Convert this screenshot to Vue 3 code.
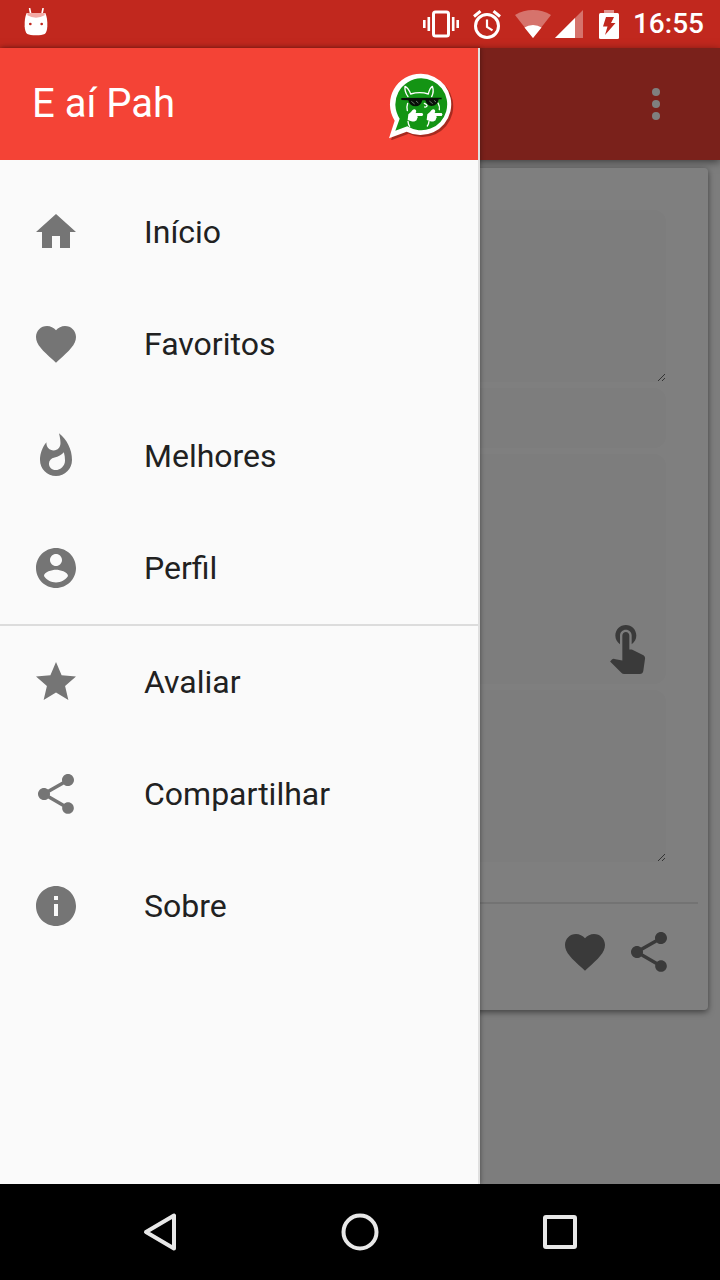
<script setup>
import { ref } from 'vue'

const heart =
  'M12 21.35l-1.45-1.32C5.4 15.36 2 12.28 2 8.5 2 5.42 4.42 3 7.5 3c1.74 0 3.41.81 4.5 2.09C13.09 3.81 14.76 3 16.5 3 19.58 3 22 5.42 22 8.5c0 3.78-3.4 6.86-8.55 11.54z'
const share =
  'M18 16.08c-.76 0-1.44.3-1.96.77L8.91 12.7c.05-.23.09-.46.09-.7s-.04-.47-.09-.7l7.05-4.11c.54.5 1.25.81 2.04.81 1.66 0 3-1.34 3-3s-1.34-3-3-3-3 1.34-3 3c0 .24.04.47.09.7L8.04 9.81C7.5 9.31 6.79 9 6 9c-1.66 0-3 1.34-3 3s1.34 3 3 3c.79 0 1.5-.31 2.04-.81l7.12 4.16c-.05.21-.08.43-.08.65 0 1.61 1.31 2.92 2.92 2.92s2.92-1.31 2.92-2.92-1.31-2.92-2.92-2.92z'
const touch =
  'M9 11.24V7.5C9 6.12 10.12 5 11.5 5S14 6.12 14 7.5v3.74c1.21-.81 2-2.18 2-3.74C16 5.01 13.99 3 11.5 3S7 5.01 7 7.5c0 1.56.79 2.93 2 3.74zm9.84 4.63l-4.54-2.26c-.17-.07-.35-.11-.54-.11H13v-6c0-.83-.67-1.5-1.5-1.5S10 6.67 10 7.5v10.74l-3.43-.72c-.08-.01-.15-.03-.24-.03-.31 0-.59.13-.79.33l-.79.8 4.94 4.94c.27.27.65.44 1.06.44h6.79c.75 0 1.33-.55 1.44-1.28l.75-5.27c.01-.07.02-.14.02-.2 0-.62-.38-1.16-.91-1.38z'

const groups = [
  [
    { label: 'Início', icon: 'M10 20v-6h4v6h5v-8h3L12 3 2 12h3v8z' },
    { label: 'Favoritos', icon: heart },
    {
      label: 'Melhores',
      icon: 'M13.5.67s.74 2.65.74 4.8c0 2.06-1.35 3.73-3.41 3.73-2.07 0-3.63-1.67-3.63-3.73l.03-.36C5.21 7.51 4 10.62 4 14c0 4.42 3.58 8 8 8s8-3.58 8-8C20 8.61 17.41 3.8 13.5.67zM11.71 19c-1.78 0-3.22-1.4-3.22-3.14 0-1.62 1.05-2.76 2.81-3.12 1.77-.36 3.6-1.21 4.62-2.58.39 1.29.59 2.65.59 4.04 0 2.65-2.15 4.8-4.8 4.8z',
    },
    {
      label: 'Perfil',
      icon: 'M12 2C6.48 2 2 6.48 2 12s4.48 10 10 10 10-4.48 10-10S17.52 2 12 2zm0 3c1.66 0 3 1.34 3 3s-1.34 3-3 3-3-1.34-3-3 1.34-3 3-3zm0 14.2c-2.5 0-4.71-1.28-6-3.22.03-1.99 4-3.08 6-3.08 1.99 0 5.97 1.09 6 3.08-1.29 1.94-3.5 3.22-6 3.22z',
    },
  ],
  [
    {
      label: 'Avaliar',
      icon: 'M12 17.27L18.18 21l-1.64-7.03L22 9.24l-7.19-.61L12 2 9.19 8.63 2 9.24l5.46 4.73L5.82 21z',
    },
    { label: 'Compartilhar', icon: share },
    {
      label: 'Sobre',
      icon: 'M12 2C6.48 2 2 6.48 2 12s4.48 10 10 10 10-4.48 10-10S17.52 2 12 2zm1 15h-2v-6h2v6zm0-8h-2V7h2v2z',
    },
  ],
]

const first = ref('')
const second = ref('')
const third = ref('')
const fourth = ref('')
</script>

<template>
  <div class="screen">
    <header class="status">
      <svg class="droid" viewBox="72 24 72 84" aria-hidden="true">
        <path d="M89 26l3 15M129 26l-3 15" stroke="#fff" stroke-width="5" stroke-linecap="round" />
        <path d="M80 39h56q7 16 6 40-1 19-8 23-8 4-26 4t-26-4q-7-4-8-23-1-24 6-40z" fill="#fff" />
        <path d="M82 39h52v7q-12 7-26 7t-26-7z" fill="#f3aaa5" />
        <circle cx="91" cy="72" r="4" fill="#c1281e" />
        <circle cx="125" cy="72" r="4" fill="#c1281e" />
      </svg>
      <div class="indicators">
        <svg width="36" height="28" viewBox="0 0 36 28" aria-hidden="true">
          <rect x="10.5" y="2" width="15" height="24" rx="2" fill="none" stroke="#fff" stroke-width="3" />
          <path d="M1.3 10v8M5.8 7v14M30.2 7v14M34.7 10v8" stroke="#fff" stroke-width="2.6" />
        </svg>
        <svg width="32" height="32" viewBox="0 0 32 32" aria-hidden="true">
          <circle cx="16" cy="18" r="11.5" fill="none" stroke="#fff" stroke-width="3" />
          <path d="M16 11.5V19l5.5 3.4" fill="none" stroke="#fff" stroke-width="2.2" />
          <path d="M3 8.5l6.5-5.400M29 8.500l-6.500-5.400" stroke="#fff" stroke-width="3" />
        </svg>
        <div class="radio">
          <svg width="36" height="28" viewBox="0 0 36 28" aria-hidden="true">
            <path d="M0 5Q8 0 18 0t18 5L18 28z" fill="#fff" fill-opacity=".35" />
            <path d="M9.5 17.5Q13 15 18 15t8.5 2.5L18 28z" fill="#fff" />
          </svg>
          <svg width="28" height="28" viewBox="0 0 28 28" aria-hidden="true">
            <path d="M28 0v28H0z" fill="#fff" fill-opacity=".35" />
            <path d="M20 8v20H0z" fill="#fff" />
          </svg>
        </div>
        <svg class="battery" width="20" height="29" viewBox="0 0 20 29" aria-hidden="true">
          <path d="M5 0h10v3H5z" fill="#fff" fill-opacity=".5" />
          <path d="M1.5 3h17q1.500 0 1.500 1.500v23q0 1.500-1.500 1.500h-17Q0 29 0 27.500v-23Q0 3 1.500 3z" fill="#fff" />
          <path d="M7 7h8l-3 6h4.500L6 25l2.500-8.500H4z" fill="#c1281e" />
        </svg>
        <time>16:55</time>
      </div>
    </header>

    <div class="app">
      <main class="page" inert>
        <div class="toolbar">
          <button class="icon-button" aria-label="Mais opções">
            <svg width="48" height="48" viewBox="0 0 24 24" aria-hidden="true">
              <circle cx="12" cy="6" r="2" /><circle cx="12" cy="12" r="2" /><circle cx="12" cy="18" r="2" />
            </svg>
          </button>
        </div>
        <section class="card">
          <div class="fields">
            <textarea v-model="first" class="field medium grip" aria-label="Texto"></textarea>
            <input v-model="second" class="field short" type="text" aria-label="Título" />
            <div class="tappable">
              <textarea v-model="third" class="field tall" aria-label="Mensagem"></textarea>
              <button class="icon-button tap" aria-label="Tocar">
                <svg width="56" height="56" viewBox="0 0 24 24" aria-hidden="true"><path :d="touch" /></svg>
              </button>
            </div>
            <textarea v-model="fourth" class="field medium grip" aria-label="Resposta"></textarea>
          </div>
          <div class="actions">
            <button class="icon-button" aria-label="Favoritar">
              <svg width="48" height="48" viewBox="0 0 24 24" aria-hidden="true"><path :d="heart" /></svg>
            </button>
            <button class="icon-button" aria-label="Compartilhar">
              <svg width="48" height="48" viewBox="0 0 24 24" aria-hidden="true"><path :d="share" /></svg>
            </button>
          </div>
        </section>
      </main>

      <div class="scrim"></div>

      <aside class="drawer">
        <div class="drawer-head">
          <h1>E aí Pah</h1>
          <svg class="logo" viewBox="24 12 204 216" aria-hidden="true">
            <path
              d="M123 29a92 92 0 1 1-43 174L27 223l17-53A92 92 0 0 1 123 29z"
              transform="translate(6 6)" fill="#7c1d14" fill-opacity=".65"
            />
            <path d="M123 29a92 92 0 1 1-43 174L27 223l17-53A92 92 0 0 1 123 29z" fill="#fff" />
            <path d="M123 43a78 78 0 1 1-41 144L46 200l13-36A78 78 0 0 1 123 43z" fill="#149414" />
            <g fill="none" stroke="#fff" stroke-width="4" stroke-linecap="round" stroke-linejoin="round">
              <path d="M84 98Q73 82 75 67q10 4 17 23 28-8 53 0 4-17 12-23 6 16-2 31" />
              <path d="M83 118q-4 12-1 22M174 117q6 11 4 20M84 172q1 10 5 15M147 172q-1 9-5 14" />
              <path d="M133 118q9 3 8 8-2 4-7 3" />
            </g>
            <path
              d="M64 102l121-1v5h-9q-3 20-22 20-13 0-18-17h-9q-5 18-20 18-18 0-22-18l-21-1z"
              fill="#081008"
            />
            <path d="M94 112l10 8M108 111l7 6M148 111l10 8M162 109l6 5" stroke="#9db09d" stroke-width="2" />
            <g fill="#fff">
              <path d="M85 151q8-5 12-12 7-6 11 0 2 4-1 8h20q5 4 0 9h-15q3 5-1 8 0 6-5 7-5 3-12 1l-11-4z" />
              <path d="M142 151q8-5 12-12 7-6 11 0 2 4-1 8h21q5 4 0 9h-16q3 5-1 8 0 6-5 7-5 3-12 1l-11-4z" />
            </g>
          </svg>
        </div>
        <nav class="menu">
          <ul v-for="(group, i) in groups" :key="i">
            <li v-for="item in group" :key="item.label">
              <a href="#">
                <svg width="48" height="48" viewBox="0 0 24 24" aria-hidden="true"><path :d="item.icon" /></svg>
                <span>{{ item.label }}</span>
              </a>
            </li>
          </ul>
        </nav>
      </aside>
    </div>

    <footer class="system-nav">
      <button aria-label="Voltar">
        <svg width="40" height="40" viewBox="0 0 40 40"><path d="M34 3.500v33L6 20z" /></svg>
      </button>
      <button aria-label="Tela inicial">
        <svg width="40" height="40" viewBox="0 0 40 40"><circle cx="20" cy="20" r="16.500" /></svg>
      </button>
      <button aria-label="Recentes">
        <svg width="40" height="40" viewBox="0 0 40 40"><rect x="5" y="5" width="30" height="30" rx="1" /></svg>
      </button>
    </footer>
  </div>
</template>

<style>
body {
  margin: 0;
  background: #000;
}
</style>

<style scoped>
.screen {
  display: flex;
  flex-direction: column;
  min-height: 100vh;
  font-family: Roboto, "Noto Sans", sans-serif;
  color: #212121;
}

svg {
  display: block;
  flex: none;
}

button {
  border: 0;
  padding: 0;
  background: none;
  cursor: pointer;
}

.status {
  display: flex;
  align-items: center;
  justify-content: space-between;
  height: 48px;
  padding: 0 16px 0 24px;
  background: #c1281e;
  color: #fff;
}

.droid {
  width: 24px;
  height: 28px;
  margin-bottom: 4px;
}

.indicators {
  display: flex;
  align-items: center;
  gap: 12px;
}

.radio {
  display: flex;
  gap: 4px;
}

.battery {
  margin: 0 2px 0 4px;
}

time {
  font-size: 28px;
  font-weight: 500;
  line-height: 32px;
}

.app {
  position: relative;
  display: flex;
  flex: 1;
  flex-direction: column;
}

.page {
  flex: 1;
  background: #fafafa;
}

.toolbar {
  display: flex;
  align-items: center;
  justify-content: flex-end;
  height: 112px;
  padding: 0 40px;
  background: #f44336;
  box-shadow: 0 2px 8px rgba(0, 0, 0, 0.5);
}

.icon-button {
  fill: #757575;
}

.toolbar .icon-button {
  fill: #fff;
}

.card {
  margin: 8px 12px;
  border-radius: 4px;
  background: #fff;
  box-shadow: 0 2px 6px rgba(0, 0, 0, 0.5);
}

.fields {
  display: flex;
  flex-direction: column;
  gap: 6px;
  padding: 42px 42px 40px;
}

.field {
  display: block;
  box-sizing: border-box;
  width: 100%;
  padding: 16px;
  border: 0;
  border-radius: 12px;
  background: #fafafa;
  font: inherit;
  font-size: 32px;
  resize: none;
}

.medium {
  height: 172px;
}

.short {
  height: 60px;
}

.tall {
  height: 230px;
}

.grip {
  resize: vertical;
}

.tappable {
  position: relative;
}

.tap {
  position: absolute;
  right: 11px;
  bottom: 10px;
}

.actions {
  display: flex;
  justify-content: flex-end;
  gap: 16px;
  margin: 0 10px;
  padding: 24px 25px 34px;
  border-top: 2px solid #e6e6e6;
}

.scrim {
  position: absolute;
  inset: 0;
  background: rgba(0, 0, 0, 0.5);
}

.drawer {
  position: absolute;
  top: 0;
  bottom: 0;
  left: 0;
  box-sizing: border-box;
  width: 480px;
  max-width: 90%;
  border-right: 2px solid #e0e0e0;
  background: #fafafa;
  box-shadow: 1px 0 4px rgba(0, 0, 0, 0.3);
}

.drawer-head {
  display: flex;
  align-items: center;
  justify-content: space-between;
  height: 112px;
  padding: 0 22px 0 32px;
  background: #f44336;
  color: #fff;
}

h1 {
  margin: 0;
  font-size: 40px;
  font-weight: 400;
  line-height: 48px;
}

.logo {
  width: 68px;
  height: 72px;
}

.menu {
  padding-top: 16px;
}

ul {
  margin: 0;
  padding: 0;
  list-style: none;
}

ul + ul {
  border-top: 2px solid #dcdcdc;
}

.menu a {
  display: flex;
  align-items: center;
  gap: 64px;
  height: 112px;
  padding: 0 32px;
  color: #212121;
  fill: #757575;
  font-size: 32px;
  line-height: 40px;
  text-decoration: none;
}

.system-nav {
  display: grid;
  grid-template-columns: repeat(3, 1fr);
  align-items: center;
  height: 96px;
  padding: 0 60px;
  background: #000;
}

.system-nav button {
  justify-self: center;
}

.system-nav svg {
  fill: none;
  stroke: #e8e8e8;
  stroke-width: 4;
  stroke-linejoin: round;
}
</style>
